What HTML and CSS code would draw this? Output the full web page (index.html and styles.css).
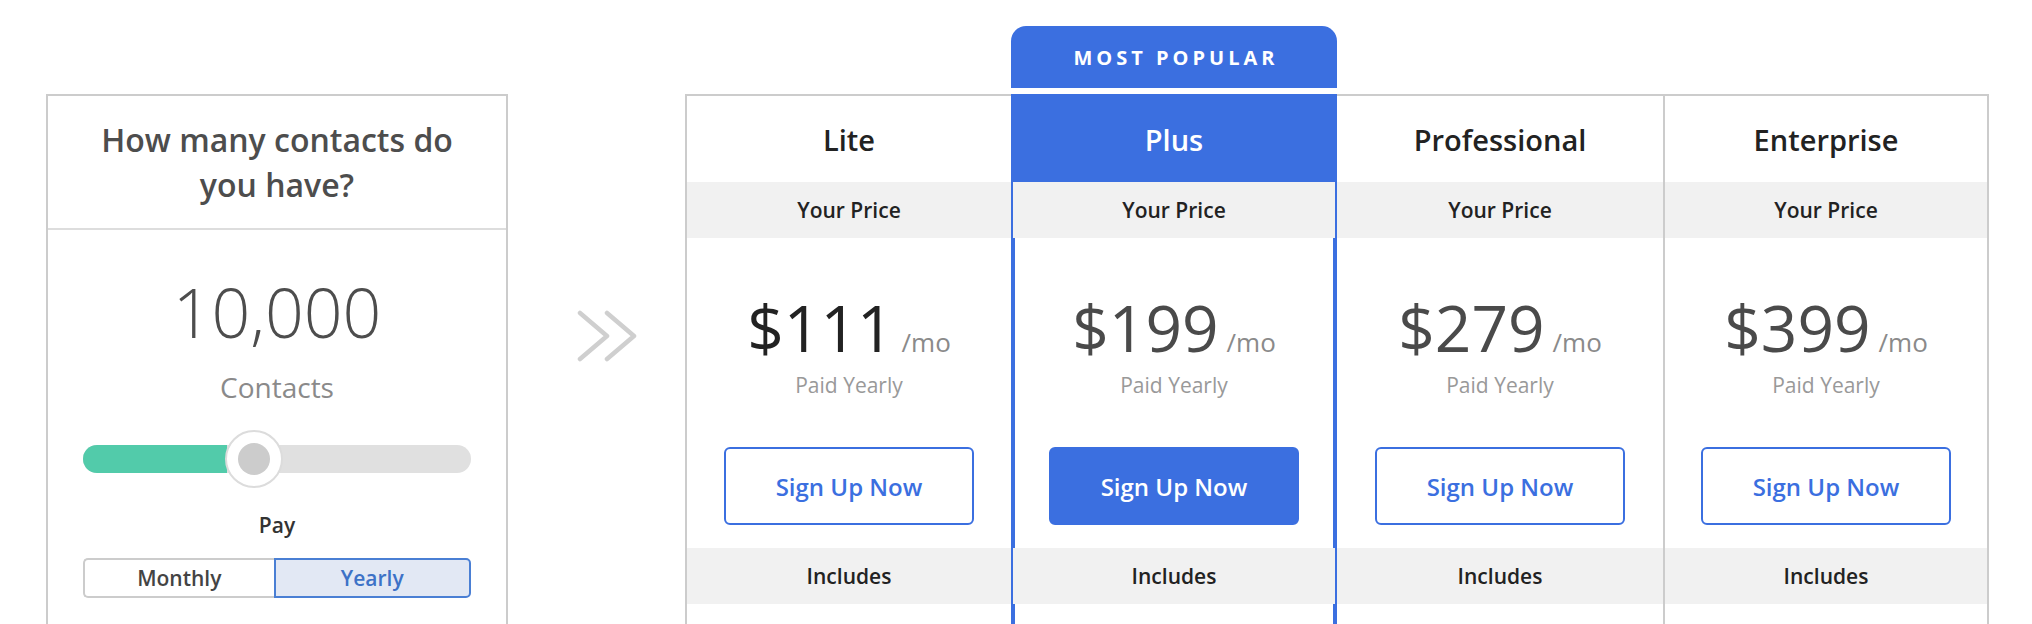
FILE: index.html
```html
<!DOCTYPE html>
<html lang="en">
<head>
<meta charset="utf-8">
<title>Pricing</title>
<link rel="stylesheet" href="styles.css">
</head>
<body>
<div class="page">
  <section class="contacts">
    <div class="contacts-head">How many contacts do you have?</div>
    <div class="contacts-body">
      <div class="contacts-num">10,000</div>
      <div class="contacts-label">Contacts</div>
      <div class="slider">
        <div class="slider-track">
          <div class="slider-fill" style="width: 37.2%"></div>
        </div>
        <div class="slider-thumb" style="left: 36.7%"><span class="slider-dot"></span></div>
      </div>
      <div class="pay-label">Pay</div>
      <div class="toggle">
        <div class="toggle-opt">Monthly</div>
        <div class="toggle-opt toggle-opt-active">Yearly</div>
      </div>
    </div>
  </section>

  <div class="arrow">
    <svg width="60" height="52" viewBox="0 0 60 52" fill="none" stroke="#cfcfcf" stroke-width="4.5" stroke-linecap="round" stroke-linejoin="round">
      <polyline points="3,3 30,26 3,49"/>
      <polyline points="30,3 57,26 30,49"/>
    </svg>
  </div>

  <div class="plans">
    <div class="plan plan-lite">
      <div class="plan-top"></div>
      <div class="plan-body">
        <div class="cell-head">Lite</div>
        <div class="cell-sub">Your Price</div>
        <div class="cell-price">
          <div class="price price-dark">$111<span class="per">/mo</span></div>
          <div class="paid">Paid Yearly</div>
          <a class="btn">Sign Up Now</a>
        </div>
        <div class="cell-sub">Includes</div>
        <div class="cell-rest"></div>
      </div>
    </div>

    <div class="plan plan-plus">
      <div class="plan-top"><div class="badge">MOST POPULAR</div></div>
      <div class="plan-body">
        <div class="cell-head">Plus</div>
        <div class="cell-sub">Your Price</div>
        <div class="cell-price">
          <div class="price">$199<span class="per">/mo</span></div>
          <div class="paid">Paid Yearly</div>
          <a class="btn btn-solid">Sign Up Now</a>
        </div>
        <div class="cell-sub">Includes</div>
        <div class="cell-rest"></div>
      </div>
    </div>

    <div class="plan plan-pro">
      <div class="plan-top"></div>
      <div class="plan-body">
        <div class="cell-head">Professional</div>
        <div class="cell-sub">Your Price</div>
        <div class="cell-price">
          <div class="price">$279<span class="per">/mo</span></div>
          <div class="paid">Paid Yearly</div>
          <a class="btn">Sign Up Now</a>
        </div>
        <div class="cell-sub">Includes</div>
        <div class="cell-rest"></div>
      </div>
    </div>

    <div class="plan plan-ent">
      <div class="plan-top"></div>
      <div class="plan-body">
        <div class="cell-head">Enterprise</div>
        <div class="cell-sub">Your Price</div>
        <div class="cell-price">
          <div class="price">$399<span class="per">/mo</span></div>
          <div class="paid">Paid Yearly</div>
          <a class="btn">Sign Up Now</a>
        </div>
        <div class="cell-sub">Includes</div>
        <div class="cell-rest"></div>
      </div>
    </div>
  </div>
</div>
</body>
</html>
```

FILE: styles.css
```css
html, body {
  margin: 0;
  padding: 0;
  height: 624px;
  overflow: hidden;
  background: #fff;
}

body {
  font-family: "Open Sans", "Noto Sans", sans-serif;
  color: #222;
}

.page {
  display: flex;
  align-items: flex-start;
  padding: 26px 0 0 46px;
}

/* Left contacts panel */
.contacts {
  width: 462px;
  box-sizing: border-box;
  margin-top: 68px;
  border: 2px solid #cccccc;
  border-bottom: none;
  height: 620px;
}

.contacts-head {
  height: 132px;
  border-bottom: 2px solid #dddddd;
  display: flex;
  align-items: center;
  justify-content: center;
  text-align: center;
  padding: 0 30px;
  font-size: 32px;
  line-height: 45px;
  font-weight: 600;
  color: #4d4d4d;
}

.contacts-body {
  padding: 47px 35px 0;
  display: flex;
  flex-direction: column;
  align-items: stretch;
  text-align: center;
}

.contacts-num {
  font-size: 68px;
  line-height: 70px;
  font-weight: 300;
  color: #4d4d4d;
}

.contacts-label {
  margin-top: 23px;
  font-size: 28px;
  line-height: 34px;
  color: #8a8a8a;
}

.slider {
  position: relative;
  margin-top: 26px;
  height: 58px;
  display: flex;
  align-items: center;
}

.slider-track {
  flex: 1;
  height: 28px;
  border-radius: 14px;
  background: #e0e0e0;
  overflow: hidden;
}

.slider-fill {
  height: 100%;
  background: #52cbaa;
}

.slider-thumb {
  position: absolute;
  top: 0;
  width: 58px;
  height: 58px;
  box-sizing: border-box;
  border-radius: 50%;
  background: #fff;
  border: 2px solid #dcdcdc;
  display: flex;
  align-items: center;
  justify-content: center;
}

.slider-dot {
  width: 32px;
  height: 32px;
  border-radius: 50%;
  background: #cccccc;
}

.pay-label {
  margin-top: 23px;
  font-size: 21px;
  line-height: 29px;
  font-weight: 600;
  color: #333;
}

.toggle {
  margin-top: 18px;
  height: 40px;
  display: flex;
}

.toggle-opt {
  box-sizing: border-box;
  flex: 191 1 0;
  display: flex;
  align-items: center;
  justify-content: center;
  border: 2px solid #cccccc;
  border-right: none;
  border-radius: 5px 0 0 5px;
  font-size: 21px;
  font-weight: 600;
  color: #444;
}

.toggle-opt-active {
  flex: 196 1 0;
  border: 2px solid #4a7fd4;
  border-radius: 0 5px 5px 0;
  background: #e2e8f4;
  color: #3d72c7;
}

/* Arrow */
.arrow {
  width: 177px;
  padding: 284px 0 0 69px;
  box-sizing: border-box;
}

.arrow svg {
  display: block;
}

/* Plans */
.plans {
  display: flex;
}

.plan {
  display: flex;
  flex-direction: column;
}

.plan-top {
  height: 68px;
}

.plan-body {
  border-top: 2px solid #cccccc;
  display: flex;
  flex-direction: column;
}

.plan-lite .plan-body {
  width: 324px;
  border-left: 2px solid #cccccc;
}

.plan-plus .plan-body {
  width: 322px;
  border: 2px solid #3b6fe0;
  border-bottom: none;
}

.plan-pro .plan-body {
  width: 326px;
}

.plan-ent .plan-body {
  width: 322px;
  border-left: 2px solid #cccccc;
  border-right: 2px solid #cccccc;
}

.badge {
  height: 62px;
  width: 326px;
  border-radius: 15px 15px 0 0;
  background: #3b6fe0;
  color: #fff;
  display: flex;
  align-items: center;
  justify-content: center;
  font-size: 20px;
  font-weight: 700;
  letter-spacing: 4px;
  padding-left: 4px;
  box-sizing: border-box;
}

.cell-head {
  height: 86px;
  display: flex;
  align-items: center;
  justify-content: center;
  padding-top: 1px;
  box-sizing: border-box;
  font-size: 29px;
  font-weight: 600;
  color: #222;
}

.plan-plus .cell-head {
  background: #3b6fe0;
  color: #fff;
  margin: -2px -2px 0;
  height: 88px;
  padding-top: 3px;
}

.cell-sub {
  height: 56px;
  background: #f1f1f1;
  display: flex;
  align-items: center;
  justify-content: center;
  font-size: 21px;
  font-weight: 600;
  color: #222;
}

.cell-price {
  height: 310px;
  box-sizing: border-box;
  padding-top: 58px;
  display: flex;
  flex-direction: column;
  align-items: center;
}

.plan-plus .cell-price,
.plan-plus .cell-rest {
  box-shadow: inset 2px 0 0 #3b6fe0, inset -2px 0 0 #3b6fe0;
}

.price {
  font-size: 64px;
  line-height: 64px;
  height: 64px;
  color: #4a4a4a;
  white-space: nowrap;
}

.price-dark {
  color: #222;
}

.per {
  font-size: 26px;
  line-height: 26px;
  color: #8a8a8a;
  margin-left: 8px;
}

.paid {
  margin-top: 11px;
  font-size: 21px;
  line-height: 28px;
  color: #999;
}

.btn {
  margin-top: 48px;
  width: 250px;
  height: 78px;
  box-sizing: border-box;
  border: 2px solid #3b6fe0;
  border-radius: 6px;
  display: flex;
  align-items: center;
  justify-content: center;
  font-size: 24px;
  font-weight: 600;
  color: #3b6fe0;
  text-decoration: none;
}

.btn-solid {
  background: #3b6fe0;
  color: #fff;
}

.cell-rest {
  height: 120px;
}
```
